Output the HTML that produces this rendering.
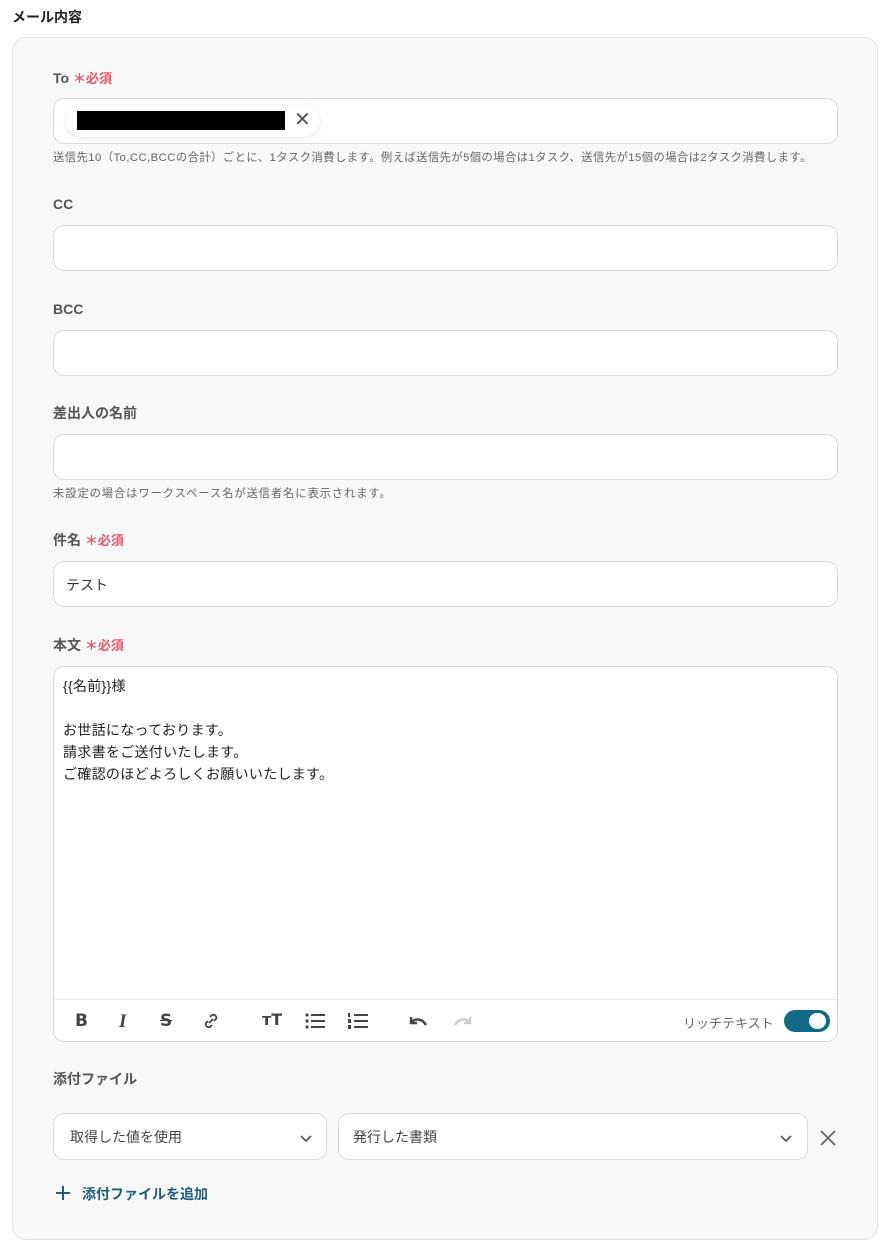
<!DOCTYPE html>
<html><head><meta charset="utf-8"><style>
*{box-sizing:border-box;margin:0;padding:0}
body{width:892px;height:1249px;background:#fff;font-family:"Liberation Sans","Noto Sans CJK JP",sans-serif;color:#333;position:relative;overflow:hidden}
.a{position:absolute}
.card{left:12px;top:37px;width:866px;height:1203px;background:#f8f8f8;border:1px solid #e3e3e3;border-radius:14px}
.lbl{left:53px;font-size:14px;font-weight:bold;color:#555;line-height:16px}
.req{color:#e8546a;font-size:13px}
.inp{left:53px;width:785px;height:46px;background:#fff;border:1px solid #d7d9dc;border-radius:11px}
.help{left:53px;font-size:11.3px;color:#666;line-height:14px;letter-spacing:0.45px;white-space:nowrap}
.tb{font-size:17px;color:#444;font-weight:bold}
</style></head><body>
<div class="a" style="left:12px;top:7px;font-size:14px;font-weight:bold;color:#222">メール内容</div>
<div class="a card"></div>

<div class="a lbl" style="top:70px">To <span class="req">＊必須</span></div>
<div class="a inp" style="top:98px"></div>
<div class="a" style="left:66px;top:105px;width:254px;height:32px;background:#fff;border-radius:16px;box-shadow:0 1px 4px rgba(0,0,0,.12)"></div>
<div class="a" style="left:77px;top:111px;width:208px;height:19px;background:#000"></div>
<div class="a" style="left:294px;top:109px;font-size:20px;color:#555;line-height:22px">✕</div>
<div class="a help" style="top:151px">送信先10（To,CC,BCCの合計）ごとに、1タスク消費します。例えば送信先が5個の場合は1タスク、送信先が15個の場合は2タスク消費します。</div>

<div class="a lbl" style="top:196px">CC</div>
<div class="a inp" style="top:225px"></div>
<div class="a lbl" style="top:301px">BCC</div>
<div class="a inp" style="top:330px"></div>
<div class="a lbl" style="top:405px">差出人の名前</div>
<div class="a inp" style="top:434px"></div>
<div class="a help" style="top:487px;letter-spacing:0.9px">未設定の場合はワークスペース名が送信者名に表示されます。</div>

<div class="a lbl" style="top:532px">件名 <span class="req">＊必須</span></div>
<div class="a inp" style="top:561px"></div>
<div class="a" style="left:66px;top:575px;font-size:14px;color:#333">テスト</div>

<div class="a lbl" style="top:637px">本文 <span class="req">＊必須</span></div>
<div class="a inp" style="top:666px;height:376px"></div>
<div class="a" style="left:63px;top:675px;font-size:14px;line-height:22px;color:#222;letter-spacing:0.3px">{{名前}}様<br><br>お世話になっております。<br>請求書をご送付いたします。<br>ご確認のほどよろしくお願いいたします。</div>
<div class="a" style="left:54px;top:999px;width:783px;height:1px;background:#ececec"></div>
<div class="a tb" style="left:75px;top:1011px;font-family:'DejaVu Sans',sans-serif">B</div>
<div class="a tb" style="left:119px;top:1011px;font-style:italic;font-family:'Liberation Serif',serif;font-size:19px">I</div>
<div class="a tb" style="left:160px;top:1011px;text-decoration:line-through;font-family:'DejaVu Sans',sans-serif">S</div>
<svg class="a" style="left:201px;top:1011px" width="20" height="20" viewBox="0 0 20 20" fill="none" stroke="#444" stroke-width="1.8"><path d="M8 12l4-4M9 6l2-2a3 3 0 014 4l-2 2M11 14l-2 2a3 3 0 01-4-4l2-2"/></svg>
<div class="a tb" style="left:262px;top:1010px;font-family:'DejaVu Sans',sans-serif;font-size:16px">ᴛT</div>
<svg class="a" style="left:304px;top:1011px" width="22" height="20" fill="#444"><circle cx="3" cy="4" r="1.6"/><circle cx="3" cy="10" r="1.6"/><circle cx="3" cy="16" r="1.6"/><rect x="7" y="3" width="14" height="2"/><rect x="7" y="9" width="14" height="2"/><rect x="7" y="15" width="14" height="2"/></svg>
<svg class="a" style="left:347px;top:1011px" width="22" height="20" fill="#444"><rect x="1" y="2" width="2" height="4"/><rect x="1" y="8" width="3" height="4"/><rect x="1" y="14" width="3" height="4"/><rect x="7" y="3" width="14" height="2"/><rect x="7" y="9" width="14" height="2"/><rect x="7" y="15" width="14" height="2"/></svg>
<svg class="a" style="left:407px;top:1012px" width="24" height="18" fill="none" stroke="#444" stroke-width="2.4"><path d="M4 5v6h6M4 11c3-5 11-5 15 2"/></svg>
<svg class="a" style="left:450px;top:1012px" width="24" height="18" fill="none" stroke="#ccc" stroke-width="2.4"><path d="M20 5v6h-6M20 11c-3-5-11-5-15 2"/></svg>
<div class="a" style="left:683px;top:1013px;font-size:13px;color:#666">リッチテキスト</div>
<div class="a" style="left:784px;top:1010px;width:46px;height:22px;border-radius:11px;background:#136a87"></div>
<div class="a" style="left:809px;top:1013px;width:17px;height:16px;border-radius:8px;background:#fff"></div>

<div class="a lbl" style="top:1071px;font-weight:bold">添付ファイル</div>
<div class="a inp" style="top:1113px;width:274px;height:47px"></div>
<div class="a" style="left:70px;top:1127px;font-size:14px;color:#444">取得した値を使用</div>
<svg class="a" style="left:299px;top:1134px" width="14" height="10" fill="none" stroke="#555" stroke-width="1.6"><path d="M2 2l5 5 5-5"/></svg>
<div class="a inp" style="left:338px;top:1113px;width:470px;height:47px"></div>
<div class="a" style="left:353px;top:1127px;font-size:14px;color:#444">発行した書類</div>
<svg class="a" style="left:779px;top:1134px" width="14" height="10" fill="none" stroke="#555" stroke-width="1.6"><path d="M2 2l5 5 5-5"/></svg>
<svg class="a" style="left:819px;top:1129px" width="18" height="18" stroke="#666" stroke-width="1.8"><path d="M2 2l14 14M16 2L2 16"/></svg>
<svg class="a" style="left:56px;top:1186px" width="14" height="14" stroke="#1d5f78" stroke-width="2"><path d="M7 0v14M0 7h14"/></svg>
<div class="a" style="left:82px;top:1184px;font-size:14px;font-weight:bold;color:#1d5f78">添付ファイルを追加</div>
</body></html>
